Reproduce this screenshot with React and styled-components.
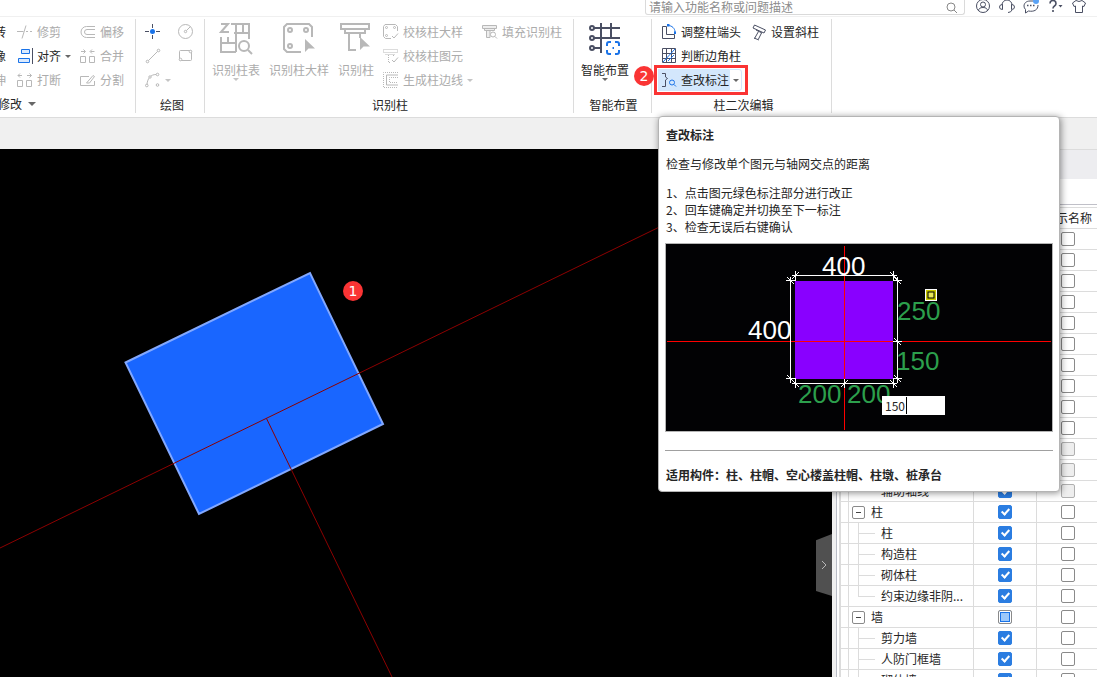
import React, { useState } from "react";
import styled, { createGlobalStyle, css } from "styled-components";

const disabledColor = "#acacac";
const lineColor = "#dcdcdc";
const blue = "#1a73e8";
const red = "#fa3434";

/* small ribbon icons, all on a 16 x 16 grid */
const TrimIcon = () => (
  <Icon>
    <path d="M9 1.5 5 14.5M0 7.5h6.5M9 7.5h2M13 7.5h2" />
  </Icon>
);

const OffsetIcon = () => (
  <Icon>
    <path d="M15 2.5H6.5a5.5 5.5 0 0 0 0 11H15M15 5.5H7a2.5 2.5 0 0 0 0 5h8" />
  </Icon>
);

const AlignIcon = () => (
  <Icon $color={blue}>
    <path d="M4.5 1.5h8v4h-8zM1.5 10.5h11v4h-11z" fill="#dbeafe" />
    <path d="M15.5 0v16" stroke="#4a4f63" />
  </Icon>
);

const MergeIcon = () => (
  <Icon>
    <path d="M.5 8.5h5v6h-5zM9.5 8.5h5v6h-5zM1 3.5h4M3.5 1.5l2 2-2 2M14.5 3.5h-4M12 1.5l-2 2 2 2" />
  </Icon>
);

const BreakIcon = () => (
  <Icon>
    <path d="M.5 8.5h5v6h-5zM9.5 8.5h5v6h-5zM5 3.5H1M3 1.5l-2 2 2 2M10 3.5h4.5M12.5 1.5l2 2-2 2" />
  </Icon>
);

const SplitIcon = () => (
  <Icon>
    <path d="M9 4.5H.5v9h14V9M6.5 11 13 3.5l1.5 1-5 6.5z" />
  </Icon>
);

const PointIcon = () => (
  <Icon $color="#4a4f63">
    <path d="M7.5 0v4M7.5 11v4M0 7.5h4M11 7.5h4" />
    <circle cx="7.5" cy="7.5" r="2.5" fill={blue} stroke="none" />
  </Icon>
);

const CircleIcon = () => (
  <Icon>
    <circle cx="7.5" cy="7.5" r="7" />
    <circle cx="7.5" cy="7.5" r="1.2" />
    <path d="m8.5 6.5 4-4" />
  </Icon>
);

const LineIcon = () => (
  <Icon>
    <circle cx="2.5" cy="13.5" r="1.3" />
    <circle cx="13.5" cy="2.5" r="1.3" />
    <path d="m3.5 12.5 9-9" />
  </Icon>
);

const RectIcon = () => (
  <Icon>
    <rect x="1.5" y="2.5" width="12" height="10" rx="1" />
    <circle cx="2.5" cy="11.5" r="1.3" fill="#fff" />
    <circle cx="12.5" cy="3.5" r="1.3" fill="#fff" />
  </Icon>
);

const ArcIcon = () => (
  <Icon>
    <path d="M2 12.5C2.5 6 6 2.5 11 2.5" />
    <circle cx="1.8" cy="13.5" r="1.3" />
    <circle cx="5" cy="5" r="1.2" fill="#fff" />
    <circle cx="12.5" cy="2.5" r="1.3" />
    <circle cx="12.5" cy="13" r="1.3" />
  </Icon>
);

const CheckSampleIcon = () => (
  <Icon>
    <path d="M14.5 7V2.5l-2-2H2l-1.5 2v10l2 2H8M9 12l2 2 4-4.5" />
    <circle cx="3.5" cy="3.5" r="1" />
    <circle cx="11.5" cy="3.5" r="1" />
    <circle cx="3.5" cy="11.5" r="1" />
  </Icon>
);

const CheckElementIcon = () => (
  <Icon>
    <path strokeDasharray="1 1" d="M.5 1.5h14v3H.5zM2.5 6.5h10M5.5 7v7.5H8M10.5 7v2" />
    <path d="m9 12 2 2 4-4.5" />
  </Icon>
);

const EdgeIcon = () => (
  <Icon>
    <path strokeDasharray="1 1" d="M15 .5H.5v15H15M15 5.5H6.5v5H15" />
    <path d="M15 3H3.5v10H15" />
  </Icon>
);

const FillIcon = () => (
  <Icon>
    <path d="M.5 1.5h14v3H.5zM2.5 4.5v2h10v-2M4.5 6.5v7H8v-7" fill="#eee" />
    <circle cx="11" cy="10.5" r="2.5" fill="#fff" />
    <path d="m13 12.5 2 2" />
  </Icon>
);

const ColumnEndIcon = () => (
  <Icon $color="#4a4f63">
    <path d="M1.5 2.5h4v8h8v4H1.5z" />
    <path d="M7 1.5c4 0 7 3 7 6.5" stroke={blue} />
    <path d="M6 0h2.5v2.5H6zM13 7.5h2V10h-2z" fill={blue} stroke="none" />
  </Icon>
);

const CornerIcon = () => (
  <Icon $color="#4a4f63">
    <path d="M1.5.5h13v14h-13z" />
    <path d="M5.5.5v14M10.5.5v14M1.5 5.5h13M1.5 10.5h13" />
    <path d="M2 14 14 1M7 13l6-6" stroke={blue} />
  </Icon>
);

const SlantIcon = () => (
  <Icon $color="#4a4f63">
    <path d="m3.5 1 11 5-1.5 3L2 4zM5 6l6 3M7.5 7.5l-4 7M10.5 9l-3 6M3 14l5 2" />
  </Icon>
);

const MarkIcon = () => (
  <Icon $color="#4a4f63">
    <path d="M1 1.5h3.5V5l2 1.5-2 1.5v6.5H1" />
    <circle cx="11" cy="10.5" r="2.5" stroke={blue} />
    <path d="m13 12.5 2 2" stroke={blue} />
  </Icon>
);

/* large ribbon icons, 32 x 32 */
const Cursor = () => <path d="M22 17v13l3.500-3.500H32z" fill="#b8b8b8" stroke="none" />;

const ColumnTableIcon = () => (
  <BigIcon>
    <path d="M1 2h7L1 10h8M11 2h18v15M16 2v28M14 11h15M23 2v9M1 15v15h15M1 21h15M8 15v6" />
    <circle cx="24" cy="24" r="5" />
    <path d="m28 28 4 4" />
  </BigIcon>
);

const ColumnSampleIcon = () => (
  <BigIcon>
    <path d="M29 15V5l-3-3H4L1 5v22l3 3h14" />
    <circle cx="7" cy="8" r="2" />
    <circle cx="23" cy="8" r="2" />
    <circle cx="7" cy="24" r="2" />
    <Cursor />
  </BigIcon>
);

const ColumnIcon = () => (
  <BigIcon>
    <path d="M1 2h28v5H1zM5 7v4h20V7M9 11v17h7M20 11v5" />
    <g transform="translate(-2 -2)">
      <Cursor />
    </g>
  </BigIcon>
);

const SmartIcon = () => (
  <BigIcon $color="#4a4f63">
    <path d="M5 6h26M5 16h26M5 26h8M12 1v30M22 1v15" />
    <circle cx="3" cy="6" r="2" />
    <circle cx="3" cy="16" r="2" />
    <circle cx="3" cy="26" r="2" />
    <path
      d="M22 20h-2q-2 0-2 2v2M18 28v2q0 2 2 2h2M26 32h2q2 0 2-2v-2M30 24v-2q0-2-2-2h-2M23.5 26h1.5"
      stroke={blue}
    />
  </BigIcon>
);

const rows = [
  ...Array.from({ length: 10 }, () => ({ name: "", on: true })),
  { name: "", on: true, locked: true },
  { name: "", on: true, locked: true },
  { name: "辅助轴线", on: true, locked: true, last: true },
  { name: "柱", group: true, on: true },
  { name: "柱", on: true },
  { name: "构造柱", on: true },
  { name: "砌体柱", on: true },
  { name: "约束边缘非阴...", on: true, last: true },
  { name: "墙", group: true, mixed: true },
  { name: "剪力墙", on: true },
  { name: "人防门框墙", on: true },
  { name: "砌体墙", on: true },
];

const Tool = ({ icon, children, caret, disabled }) => (
  <ToolButton type="button" disabled={disabled}>
    {icon}
    {children}
    {caret && <Caret />}
  </ToolButton>
);

const DisplayRow = ({ row }) => {
  const [on, setOn] = useState(!!row.on);
  const [named, setNamed] = useState(false);
  const label = row.name || "图层";

  return (
    <tr>
      <NameCell>
        <TreeLine>
          <Guide />
          {row.group ? (
            <Toggle type="button" aria-label={label} />
          ) : (
            <Branch $last={row.last} />
          )}
          {row.name}
        </TreeLine>
      </NameCell>
      <CheckCell>
        <CheckBox
          type="checkbox"
          aria-label={label}
          checked={on}
          $mixed={row.mixed}
          onChange={() => setOn(!on)}
        />
      </CheckCell>
      <CheckCell>
        <CheckBox
          type="checkbox"
          aria-label={label}
          checked={named}
          disabled={row.locked}
          onChange={() => setNamed(!named)}
        />
      </CheckCell>
    </tr>
  );
};

const DimensionDrawing = () => (
  <Figure>
    <Drawing viewBox="0 0 386 187">
      <rect x="129" y="37" width="98" height="98" fill="#8900ff" />
      <path d="M178.5 2v184M1 97.5h384" stroke="#f00" />
      <g stroke="#fff" fill="none">
        <path d="M129.5 27v10M227.5 27v10M126 31.5h105M126 35l7-7M224 28l7 7" />
        <path d="M120 36.5h10M120 134.5h10M124.5 33v106M121 33l7 7M121 131l7 7" />
        <path d="M227 36.5h9M227 97.5h9M227 134.5h9M231.5 33v106M228 33l7 7M228 94l7 7M228 131l7 7" />
        <path d="M129.5 135v9M178.5 135v9M227.5 135v9M126 139.5h105M126 136l7 7M175 143l7-7M224 136l7 7" />
      </g>
      <Dimension x="156" y="31">400</Dimension>
      <Dimension x="82" y="95">400</Dimension>
      <Dimension x="231" y="76" $green>250</Dimension>
      <Dimension x="230" y="126" $green>150</Dimension>
      <Dimension x="132" y="159" $green>200</Dimension>
      <Dimension x="181" y="159" $green>200</Dimension>
      <rect x="259.5" y="45.5" width="11" height="11" fill="#c8c800" stroke="#fff" />
      <rect x="262" y="48" width="6" height="6" fill="#e6e65a" stroke="#000" />
    </Drawing>
    <ValueBox>
      <ValueInput type="text" aria-label="标注" defaultValue="150" />
    </ValueBox>
  </Figure>
);

const App = () => {
  const [query, setQuery] = useState("");

  return (
    <Page>
      <GlobalStyle />
      <TopBar>
        <SearchBox>
          <SearchInput
            type="text"
            aria-label="请输入功能名称或问题描述"
            placeholder="请输入功能名称或问题描述"
            value={query}
            onChange={(e) => setQuery(e.target.value)}
          />
          <Icon>
            <circle cx="7" cy="7" r="4" stroke="#888" />
            <path d="m10 10 3 3" stroke="#888" />
          </Icon>
        </SearchBox>
        <TopIcons>
          <TopButton type="button" aria-label="用户">
            <Icon $color="#4a4f63">
              <circle cx="8" cy="6" r="6.5" />
              <circle cx="8" cy="4.5" r="2.5" />
              <path d="M3.5 11q0-3.500 4.500-3.500t4.500 3.500" />
            </Icon>
          </TopButton>
          <TopButton type="button" aria-label="客服">
            <Icon $color="#4a4f63">
              <path d="M3 5a5 5 0 0 1 10 0M13 10q-1 2.500-4 2.500" />
              <path d="M3.500 4.500v5Q.5 9.500.5 7t3-2.500zM12.500 4.500v5q3 0 3-2.500t-3-2.500z" />
            </Icon>
          </TopButton>
          <TopButton type="button" aria-label="消息">
            <Icon $color="#4a4f63">
              <path d="M10 1H7C3 1 1 3.500 1 6q0 2 1.500 3.500V13l3-2C11 12 15 10 15 5" />
              <path d="M4 5.500h1.500M7 5.500h1.500M10 5.500h1.500" strokeWidth="1.500" />
              <circle cx="13" cy="1" r="3" fill="#5aa2f5" stroke="none" />
            </Icon>
          </TopButton>
          <TopButton type="button" aria-label="帮助">
            <Icon $color="#4a4f63">
              <path d="M3 3.500Q3 .5 6 .5t3 3q0 1.500-1.500 2.500T6 8.500M6 10v2" strokeWidth="1.600" />
              <path d="M11.500 5h4l-2 2.500z" fill="#4a4f63" stroke="none" />
            </Icon>
          </TopButton>
          <TopButton type="button" aria-label="皮肤">
            <Icon $color="#4a4f63">
              <path d="M5 .5 1.500 3 3 6.500l1.500-.5v6.500h7V6l1.500.5L14.500 3 11 .5q-3 2-6 0z" />
            </Icon>
          </TopButton>
        </TopIcons>
      </TopBar>

      <Ribbon>
        <Group $width={136} $pad={0}>
          <Tools>
            <CutColumn>
              <Tool>转</Tool>
              <Tool>像</Tool>
              <Tool disabled>伸</Tool>
            </CutColumn>
            <Column>
              <Tool disabled icon={<TrimIcon />}>修剪</Tool>
              <Tool icon={<AlignIcon />} caret>对齐</Tool>
              <Tool disabled icon={<BreakIcon />}>打断</Tool>
            </Column>
            <Column>
              <Tool disabled icon={<OffsetIcon />}>偏移</Tool>
              <Tool disabled icon={<MergeIcon />}>合并</Tool>
              <Tool disabled icon={<SplitIcon />}>分割</Tool>
            </Column>
          </Tools>
          <CutLabel>
            修改
            <WideCaret />
          </CutLabel>
        </Group>

        <Group $width={69} $pad={9}>
          <DrawTools>
            <Tool icon={<PointIcon />} />
            <Tool disabled icon={<CircleIcon />} />
            <Tool disabled icon={<LineIcon />} />
            <Tool disabled icon={<RectIcon />} />
            <Tool disabled icon={<ArcIcon />} caret />
          </DrawTools>
          <GroupLabel>绘图</GroupLabel>
        </Group>

        <Group $width={369} $pad={7}>
          <Tools>
            <BigButton type="button" disabled>
              <ColumnTableIcon />
              识别柱表
              <Caret />
            </BigButton>
            <BigButton type="button" disabled>
              <ColumnSampleIcon />
              识别柱大样
            </BigButton>
            <BigButton type="button" disabled>
              <ColumnIcon />
              识别柱
            </BigButton>
            <Column>
              <Tool disabled icon={<CheckSampleIcon />}>校核柱大样</Tool>
              <Tool disabled icon={<CheckElementIcon />}>校核柱图元</Tool>
              <Tool disabled icon={<EdgeIcon />} caret>生成柱边线</Tool>
            </Column>
            <Column>
              <Tool disabled icon={<FillIcon />}>填充识别柱</Tool>
            </Column>
          </Tools>
          <GroupLabel>识别柱</GroupLabel>
        </Group>

        <Group $width={78} $pad={7}>
          <Tools>
            <BigButton type="button">
              <SmartIcon />
              智能布置
              <Caret />
            </BigButton>
          </Tools>
          <GroupLabel>智能布置</GroupLabel>
        </Group>

        <Group $width={180} $pad={9}>
          <Tools>
            <Column>
              <Tool icon={<ColumnEndIcon />}>调整柱端头</Tool>
              <Tool icon={<CornerIcon />}>判断边角柱</Tool>
              <SplitButton>
                <ActiveButton type="button">
                  <MarkIcon />
                  查改标注
                </ActiveButton>
                <DropButton type="button" aria-label="查改标注">
                  <Caret />
                </DropButton>
                <Highlight />
                <StepTwo>2</StepTwo>
                <Tip role="tooltip">
                  <TipTitle>查改标注</TipTitle>
                  <TipText>检查与修改单个图元与轴网交点的距离</TipText>
                  <TipText>
                    1、点击图元绿色标注部分进行改正
                    <br />
                    2、回车键确定并切换至下一标注
                    <br />
                    3、检查无误后右键确认
                  </TipText>
                  <DimensionDrawing />
                  <TipFooter>适用构件：柱、柱帽、空心楼盖柱帽、柱墩、桩承台</TipFooter>
                </Tip>
              </SplitButton>
            </Column>
            <Column>
              <Tool icon={<SlantIcon />}>设置斜柱</Tool>
            </Column>
          </Tools>
          <GroupLabel>柱二次编辑</GroupLabel>
        </Group>
      </Ribbon>

      <Strip />

      <Workspace>
        <Viewport>
          <Scene>
            <path
              d="M125.500 213.500 310 124l73 151-184 90z"
              fill="#1966ff"
              stroke="#82a8ff"
              strokeWidth="2"
            />
            <path d="m0 399 832-405M266.500 269.500 392 528" stroke="#8c0000" fill="none" />
          </Scene>
          <StepOne>1</StepOne>
          <Handle type="button" aria-label="展开">
            <Icon>
              <path d="m6 4 4 4-4 4" />
            </Icon>
          </Handle>
        </Viewport>
        <Panel>
          <PanelTabs />
          <PanelTools />
          <Table>
            <colgroup>
              <col />
              <CheckCol />
              <CheckCol />
            </colgroup>
            <thead>
              <tr>
                <HeadCell />
                <HeadCell />
                <HeadCell>显示名称</HeadCell>
              </tr>
            </thead>
            <tbody>
              {rows.map((row, i) => (
                <DisplayRow key={i} row={row} />
              ))}
            </tbody>
          </Table>
        </Panel>
      </Workspace>
    </Page>
  );
};

const GlobalStyle = createGlobalStyle`
  * {
    box-sizing: border-box;
  }
  body {
    margin: 0;
    background: #fff;
  }
  body, button, input {
    font-family: "Noto Sans CJK SC", sans-serif;
    font-size: 12px;
    line-height: 16px;
    color: #262626;
  }
  button {
    padding: 0;
    border: none;
    background: none;
    white-space: nowrap;
  }
`;

const Page = styled.div`
  height: 100vh;
  display: flex;
  flex-direction: column;
  overflow: hidden;
`;

const Icon = styled.svg.attrs({ viewBox: "0 0 16 16" })`
  width: 16px;
  height: 16px;
  flex: none;
  overflow: visible;
  fill: none;
  stroke: ${(props) => props.$color || "#b8b8b8"};
`;

const BigIcon = styled.svg.attrs({ viewBox: "0 0 32 32" })`
  width: 32px;
  height: 32px;
  margin-bottom: 8px;
  overflow: visible;
  fill: none;
  stroke-width: 2;
  stroke: ${(props) => props.$color || "#b8b8b8"};
`;

const Caret = styled.span`
  flex: none;
  border: 3px solid transparent;
  border-top-color: currentColor;
  border-bottom: none;
  opacity: 0.7;
`;

const WideCaret = styled(Caret)`
  border-width: 4px;
  border-bottom: none;
`;

const TopBar = styled.header`
  height: 17px;
  flex: none;
  display: flex;
  justify-content: flex-end;
  align-items: flex-start;
  border-bottom: 1px solid #f0f0f0;
`;

const SearchBox = styled.div`
  width: 320px;
  height: 15px;
  display: flex;
  padding-right: 4px;
  border: 1px solid #dadada;
  border-top: none;
  border-radius: 0 0 3px 3px;
`;

const SearchInput = styled.input`
  flex: 1;
  min-width: 0;
  height: 14px;
  padding: 0 3px;
  border: none;
  outline: none;
  background: none;
  line-height: 14px;
  &::placeholder {
    color: #8c8c8c;
  }
`;

const TopIcons = styled.div`
  display: flex;
  gap: 8px;
  padding: 0 10px;
`;

const TopButton = styled.button`
  height: 16px;
`;

const Ribbon = styled.nav`
  flex: none;
  display: flex;
  padding: 2px 0 4px;
  border-bottom: 1px solid ${lineColor};
`;

const Group = styled.section`
  width: ${(props) => props.$width}px;
  padding: 1px 0 0 ${(props) => props.$pad}px;
  border-right: 1px solid ${lineColor};
  flex: none;
`;

const Tools = styled.div`
  height: 72px;
  display: flex;
  gap: 9px;
`;

const Column = styled.div`
  display: flex;
  flex-direction: column;
`;

const CutColumn = styled(Column)`
  width: 8px;
  align-items: flex-end;
  overflow: hidden;
  padding-right: 2px;
`;

const DrawTools = styled.div`
  height: 72px;
  display: grid;
  grid-template-columns: 26px 16px;
  column-gap: 7px;
`;

const ToolButton = styled.button`
  height: 24px;
  display: flex;
  align-items: center;
  gap: 4px;
  &:disabled {
    color: ${disabledColor};
  }
`;

const BigButton = styled.button`
  padding-top: 2px;
  display: flex;
  flex-direction: column;
  align-items: center;
  &:disabled {
    color: ${disabledColor};
  }
`;

const GroupLabel = styled.div`
  padding: 5px 5px 0 0;
  text-align: center;
`;

const CutLabel = styled(GroupLabel)`
  width: 36px;
  padding: 4px 0 0;
  overflow: hidden;
  white-space: nowrap;
  display: flex;
  justify-content: flex-end;
  align-items: center;
  gap: 6px;
`;

const SplitButton = styled.div`
  position: relative;
  height: 24px;
  display: flex;
  align-items: center;
`;

const ActiveButton = styled.button`
  height: 22px;
  display: flex;
  align-items: center;
  gap: 4px;
  background: #d3e7fc;
  box-shadow: -3px 0 #d3e7fc;
`;

const DropButton = styled.button`
  width: 13px;
  height: 22px;
  display: flex;
  align-items: center;
  justify-content: center;
  border: 1px solid #d3e7fc;
  border-radius: 0 3px 3px 0;
`;

/* red frame drawn around the active button */
const Highlight = styled.span`
  position: absolute;
  top: -3px;
  left: -7px;
  width: 94px;
  height: 30px;
  border: 3px solid ${red};
  pointer-events: none;
`;

const badge = css`
  position: absolute;
  width: 20px;
  height: 20px;
  border-radius: 50%;
  background: ${red};
  color: #fff;
  font: 14px/20px "DejaVu Sans", sans-serif;
  text-align: center;
`;

const StepTwo = styled.span`
  ${badge}
  top: -2px;
  left: -27px;
`;

const StepOne = styled.span`
  ${badge}
  top: 132px;
  left: 343px;
`;

const Tip = styled.div`
  position: absolute;
  z-index: 2;
  top: 48px;
  left: -3px;
  width: 402px;
  padding: 9px 6px 8px;
  border: 1px solid #b4b4b4;
  border-radius: 4px;
  background: #fff;
  box-shadow: 1px 1px 7px rgba(0, 0, 0, 0.45);
  line-height: 17px;
`;

const TipTitle = styled.h2`
  margin: 0;
  padding-left: 1px;
  font-size: 12px;
`;

const TipText = styled.p`
  margin: 12px 0 0;
  padding-left: 1px;
`;

const Figure = styled.div`
  position: relative;
  margin: 8px 0 18px;
  border: 1px solid #b4b4b4;
  background: #020204;
`;

const Drawing = styled.svg`
  display: block;
  width: 100%;
`;

const Dimension = styled.text`
  font: 26px "Liberation Sans", sans-serif;
  fill: ${(props) => (props.$green ? "#2c9f4c" : "#fff")};
`;

const ValueBox = styled.div`
  position: absolute;
  left: 216px;
  top: 152px;
  width: 63px;
  height: 19px;
  background: #fff;
  &::after {
    content: "";
    position: absolute;
    left: 24px;
    top: 1px;
    width: 1px;
    height: 17px;
    background: #000;
  }
`;

const ValueInput = styled.input`
  display: block;
  width: 100%;
  height: 19px;
  padding: 0 3px;
  border: none;
  outline: none;
  background: none;
`;

const TipFooter = styled.p`
  margin: 0;
  padding: 15px 0 0 1px;
  border-top: 1px solid #a0a0a0;
  font-weight: bold;
`;

const Strip = styled.div`
  height: 31px;
  flex: none;
  background: #f0f0f0;
`;

const Workspace = styled.main`
  flex: 1;
  min-height: 0;
  display: flex;
`;

const Viewport = styled.div`
  position: relative;
  flex: 1;
  min-width: 0;
  background: #000;
`;

const Scene = styled.svg`
  display: block;
  width: 100%;
  height: 100%;
`;

const Handle = styled.button`
  position: absolute;
  right: 0;
  top: 385px;
  width: 16px;
  height: 62px;
  display: flex;
  align-items: center;
  background: #505050;
  clip-path: polygon(0 10%, 100% 0, 100% 100%, 0 92%);
`;

const Panel = styled.aside`
  width: 265px;
  flex: none;
  overflow: hidden;
  padding-left: 3px;
  border-left: 4px solid #f0f0f0;
  box-shadow: inset 1px 0 #b9bcc6;
`;

const PanelTabs = styled.div`
  height: 30px;
  border-top: 1px solid ${lineColor};
  background: #ededf0;
`;

const PanelTools = styled.div`
  height: 29px;
  border-bottom: 1px solid ${lineColor};
  box-shadow: inset 0 -2px #fff, inset 0 -3px #c0c0c8;
`;

const Table = styled.table`
  width: 261px;
  table-layout: fixed;
  border-collapse: separate;
  border-spacing: 0;
  border-left: 2px solid ${lineColor};
`;

const CheckCol = styled.col`
  width: 63px;
`;

const HeadCell = styled.th`
  height: 21px;
  padding: 0;
  border-right: 1px solid ${lineColor};
  border-bottom: 1px solid ${lineColor};
  font-weight: normal;
`;

const NameCell = styled.td`
  height: 21px;
  padding: 0;
  border-right: 1px solid ${lineColor};
  border-bottom: 1px solid ${lineColor};
`;

const CheckCell = styled(NameCell)`
  text-align: center;
`;

const TreeLine = styled.div`
  height: 20px;
  display: flex;
  align-items: center;
  white-space: nowrap;
`;

const Guide = styled.span`
  width: 8px;
  height: 20px;
  flex: none;
  border-right: 1px solid ${lineColor};
`;

const Branch = styled.span`
  width: 17px;
  height: 20px;
  flex: none;
  margin: 0 6px 0 9px;
  background:
    linear-gradient(${lineColor}, ${lineColor}) 0 0 / 1px ${(props) => (props.$last ? "10px" : "100%")} no-repeat,
    linear-gradient(${lineColor}, ${lineColor}) 0 10px / 100% 1px no-repeat;
`;

const Toggle = styled.button`
  width: 13px;
  height: 13px;
  flex: none;
  margin: 0 6px 0 3px;
  border: 1px solid #8a8a8a;
  border-radius: 2px;
  background: linear-gradient(#444, #444) center / 5px 1px no-repeat;
`;

const CheckBox = styled.input`
  appearance: none;
  display: block;
  width: 14px;
  height: 14px;
  margin: 0 auto;
  border: 1px solid #8a8a8a;
  border-radius: 2px;
  background: #fff;
  &:disabled {
    border-color: #b0b0b0;
    background: #eee;
  }
  &:checked {
    position: relative;
    border-color: #2b7de1;
    background: #2b7de1;
  }
  &:checked::after {
    content: "";
    position: absolute;
    left: 4px;
    top: 1px;
    width: 5px;
    height: 8px;
    border: solid #fff;
    border-width: 0 2px 2px 0;
    transform: rotate(42deg);
    box-sizing: border-box;
  }
  ${(props) =>
    props.$mixed &&
    css`
      padding: 1px;
      background: #9cc8fa content-box;
      box-shadow: inset 0 0 0 1px #fff, inset 0 0 0 2px ${blue};
    `}
`;

export default App;
